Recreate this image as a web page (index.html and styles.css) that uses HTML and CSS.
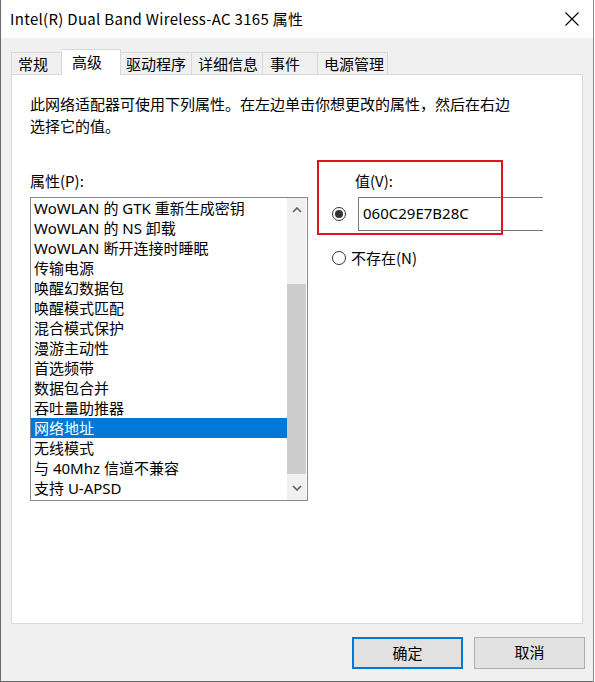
FILE: index.html
```html
<!DOCTYPE html>
<html lang="zh-CN">
<head>
    <meta charset="UTF-8">
    <title>Intel(R) Dual Band Wireless-AC 3165 属性</title>
    <link rel="stylesheet" href="styles.css">
</head>
<body>
    <div class="window">
        <div class="titlebar">
            <span class="title">Intel(R) Dual Band Wireless-AC 3165 属性</span>
            <svg class="close" width="14" height="14" viewBox="0 0 14 14">
                <path d="M0.5 0.5 L13.5 13.5 M13.5 0.5 L0.5 13.5" stroke="#000" stroke-width="1.1" fill="none"/>
            </svg>
        </div>

        <div class="tabs">
            <div class="tab">常规</div>
            <div class="tab active">高级</div>
            <div class="tab">驱动程序</div>
            <div class="tab">详细信息</div>
            <div class="tab">事件</div>
            <div class="tab">电源管理</div>
        </div>

        <div class="panel">
            <p class="intro">此网络适配器可使用下列属性。在左边单击你想更改的属性，然后在右边<br>选择它的值。</p>

            <div class="columns">
                <div class="prop-col">
                    <div class="label">属性(P):</div>
                    <div class="listbox">
                        <ul class="items">
                            <li>WoWLAN 的 GTK 重新生成密钥</li>
                            <li>WoWLAN 的 NS 卸载</li>
                            <li>WoWLAN 断开连接时睡眠</li>
                            <li>传输电源</li>
                            <li>唤醒幻数据包</li>
                            <li>唤醒模式匹配</li>
                            <li>混合模式保护</li>
                            <li>漫游主动性</li>
                            <li>首选频带</li>
                            <li>数据包合并</li>
                            <li>吞吐量助推器</li>
                            <li class="selected">网络地址</li>
                            <li>无线模式</li>
                            <li>与 40Mhz 信道不兼容</li>
                            <li>支持 U-APSD</li>
                        </ul>
                        <div class="scrollbar">
                            <div class="sb-btn">
                                <svg width="10" height="6" viewBox="0 0 10 6"><path d="M1 5 L5 1 L9 5" stroke="#606060" stroke-width="1.6" fill="none"/></svg>
                            </div>
                            <div class="sb-track">
                                <div class="sb-thumb"></div>
                            </div>
                            <div class="sb-btn">
                                <svg width="10" height="6" viewBox="0 0 10 6"><path d="M1 1 L5 5 L9 1" stroke="#606060" stroke-width="1.6" fill="none"/></svg>
                            </div>
                        </div>
                    </div>
                </div>

                <div class="value-col">
                    <div class="label value-label">值(V):</div>
                    <div class="value-row">
                        <span class="radio checked"></span>
                        <div class="textbox">060C29E7B28C</div>
                    </div>
                    <div class="none-row">
                        <span class="radio"></span>
                        <span>不存在(N)</span>
                    </div>
                    <div class="highlight"></div>
                </div>
            </div>
        </div>

        <div class="footer">
            <button class="btn primary">确定</button>
            <button class="btn">取消</button>
        </div>
    </div>
</body>
</html>
```

FILE: styles.css
```css
body {
    margin: 0;
    padding: 0;
    background-color: #fff;
    font-family: "Noto Sans CJK SC", "Noto Sans", sans-serif;
    font-size: 15px;
    color: #000;
}

.window {
    width: 594px;
    height: 682px;
    box-sizing: border-box;
    background-color: #f0f0f0;
    border-left: 1px solid #6b6b6b;
    border-right: 1px solid #8a8a8a;
    border-bottom: 1px solid #6b6b6b;
}

.titlebar {
    height: 38px;
    background-color: #fff;
    display: flex;
    align-items: center;
    justify-content: space-between;
    padding: 0 14px 0 9px;
}

.title {
    line-height: 20px;
    letter-spacing: 0.3px;
}

/* tabs */
.tabs {
    display: flex;
    align-items: flex-end;
    height: 26px;
    margin-top: 10px;
    padding-left: 10px;
}

.tab {
    height: 22px;
    line-height: 21px;
    box-sizing: border-box;
    padding-left: 6px;
    border: 1px solid #d9d9d9;
    border-bottom: none;
    border-left: none;
    background-color: #f0f0f0;
}

.tab:first-child {
    border-left: 1px solid #d9d9d9;
    width: 51px;
}

.tab:nth-child(2) { width: 59px; }
.tab:nth-child(3) { width: 71px; padding-left: 5px; }
.tab:nth-child(4) { width: 71px; }
.tab:nth-child(5) { width: 55px; padding-left: 7px; }
.tab:nth-child(6) { width: 70px; }

.tab.active {
    height: 26px;
    line-height: 23px;
    padding-left: 10px;
    background-color: #fff;
    position: relative;
    top: 1px;
}

/* page */
.panel {
    margin: 0 10px;
    height: 550px;
    box-sizing: border-box;
    background-color: #fff;
    border: 1px solid #d9d9d9;
    padding: 18px 18px 0 18px;
}

.intro {
    margin: 0;
    line-height: 22px;
}

.columns {
    display: flex;
    margin-top: 33px;
}

.label {
    line-height: 22px;
}

.prop-col {
    width: 278px;
}

.listbox {
    margin-top: 5px;
    height: 304px;
    box-sizing: border-box;
    border: 1px solid #828790;
    display: flex;
}

.items {
    list-style: none;
    margin: 0;
    padding: 0;
    flex: 1;
    font-family: "Noto Sans", "Noto Sans CJK SC", sans-serif;
}

.items li {
    height: 20px;
    line-height: 20px;
    padding-left: 3px;
    white-space: nowrap;
}

.items li.selected {
    background-color: #0078d7;
    color: #fff;
}

.scrollbar {
    width: 19px;
    margin-right: 1px;
    background-color: #f0f0f0;
    display: flex;
    flex-direction: column;
}

.sb-btn {
    height: 24px;
    display: flex;
    align-items: center;
    justify-content: center;
}

.sb-track {
    flex: 1;
    display: flex;
    flex-direction: column;
    justify-content: flex-end;
}

.sb-thumb {
    height: 190px;
    background-color: #cdcdcd;
    margin-bottom: 2px;
}

/* value side */
.value-col {
    position: relative;
    margin-left: 24px;
    flex: 1;
}

.value-label {
    margin-left: 23px;
}

.value-row {
    display: flex;
    align-items: center;
    margin-top: 5px;
}

.radio {
    width: 14px;
    height: 14px;
    box-sizing: border-box;
    border: 1px solid #333;
    border-radius: 50%;
    background-color: #fff;
    display: inline-flex;
    align-items: center;
    justify-content: center;
    flex-shrink: 0;
}

.radio.checked::after {
    content: "";
    width: 8px;
    height: 8px;
    border-radius: 50%;
    background-color: #333;
}

.textbox {
    margin-left: 12px;
    width: 185px;
    height: 34px;
    box-sizing: border-box;
    border: 1px solid #7a7a7a;
    border-right: none;
    line-height: 30px;
    padding-left: 4px;
    font-family: "Noto Sans", "Noto Sans CJK SC", sans-serif;
}

.none-row {
    display: flex;
    align-items: center;
    gap: 5px;
    margin-top: 16px;
    line-height: 22px;
}

.highlight {
    position: absolute;
    left: -15px;
    top: -10px;
    width: 186px;
    height: 75px;
    box-sizing: border-box;
    border: 2px solid #e0141e;
}

/* buttons */
.footer {
    display: flex;
    justify-content: flex-end;
    gap: 11px;
    margin-top: 13px;
    padding-right: 8px;
}

.btn {
    width: 111px;
    height: 32px;
    font-family: inherit;
    font-size: 15px;
    line-height: 28px;
    background-color: #e1e1e1;
    border: 1px solid #adadad;
    padding: 0 0 2px 0;
    color: #000;
}

.btn.primary {
    border: 2px solid #0078d7;
}
```
